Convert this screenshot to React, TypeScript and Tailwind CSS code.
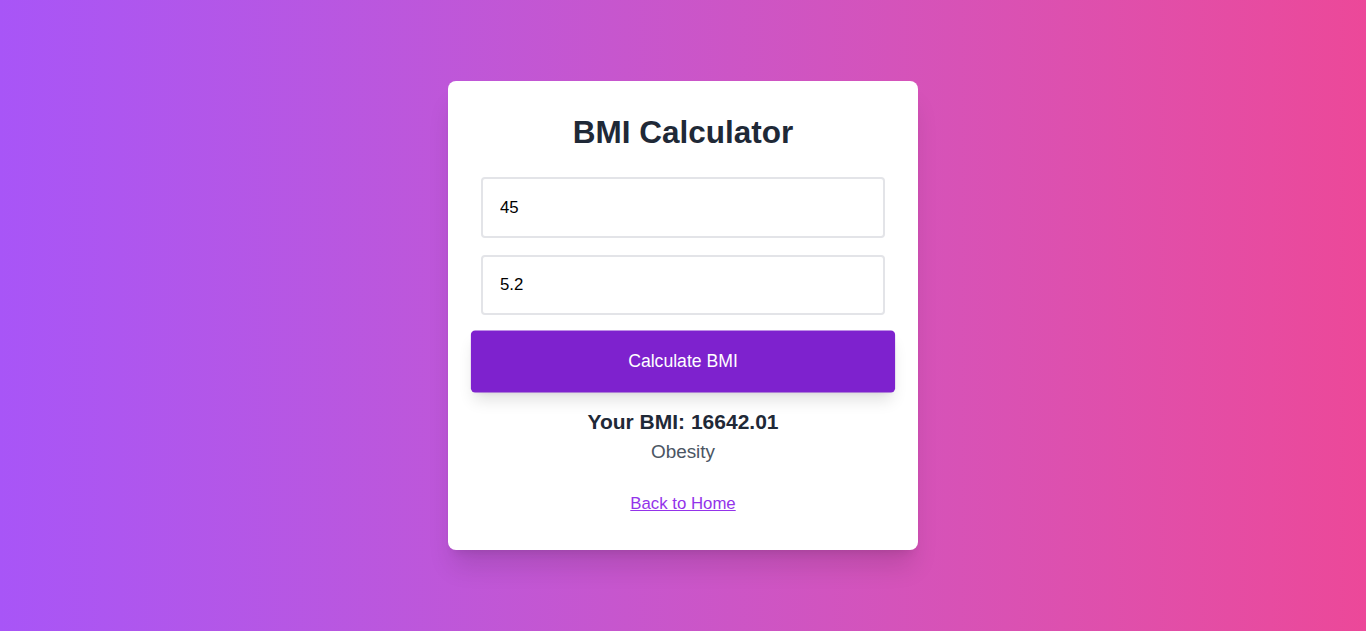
import React from "react";

export default function App() {
  return (
    <div
      className="min-h-screen w-full flex items-center justify-center bg-gradient-to-r from-[#a855f7] to-[#ec4899]"
      style={{ fontFamily: '"Liberation Sans", Arial, sans-serif' }}
    >
      <div className="w-[470px] bg-white rounded-[8px] py-[33.6px] px-[33px] shadow-[0_21px_26px_-5px_rgba(0,0,0,0.12),0_8px_10px_-6px_rgba(0,0,0,0.1)]">
        <h1 className="text-[31.5px] leading-[37.8px] font-bold text-center text-[#1f2937] mb-[25.2px]">
          BMI Calculator
        </h1>
        <input
          type="text"
          defaultValue="45"
          className="block w-full h-[60.5px] border-2 border-[#e3e4e8] rounded-[4px] pl-[17px] text-[16.8px] text-black outline-none mb-[16.8px]"
          style={{ fontFamily: '"Liberation Sans", Arial, sans-serif' }}
        />
        <input
          type="text"
          defaultValue="5.2"
          className="block w-full h-[60.5px] border-2 border-[#e3e4e8] rounded-[4px] pl-[17px] text-[16.8px] text-black outline-none mb-[16.8px]"
          style={{ fontFamily: '"Liberation Sans", Arial, sans-serif' }}
        />
        <button className="block w-full h-[58.8px] bg-[#7e22ce] text-white text-[16.8px] rounded-[4px] scale-105 shadow-[0_10px_15px_-3px_rgba(0,0,0,0.12),0_4px_6px_-4px_rgba(0,0,0,0.1)]">
          Calculate BMI
        </button>
        <div className="mt-[16.8px] text-center">
          <p className="text-[21px] leading-[29.4px] font-bold text-[#1f2937]">Your BMI: 16642.01</p>
          <p className="text-[18.9px] leading-[29.4px] text-[#4b5563]">Obesity</p>
        </div>
        <div className="mt-[25.2px] text-center leading-[25.2px]">
          <a href="#" className="text-[16.8px] text-[#9333ea] underline">
            Back to Home
          </a>
        </div>
      </div>
    </div>
  );
}
